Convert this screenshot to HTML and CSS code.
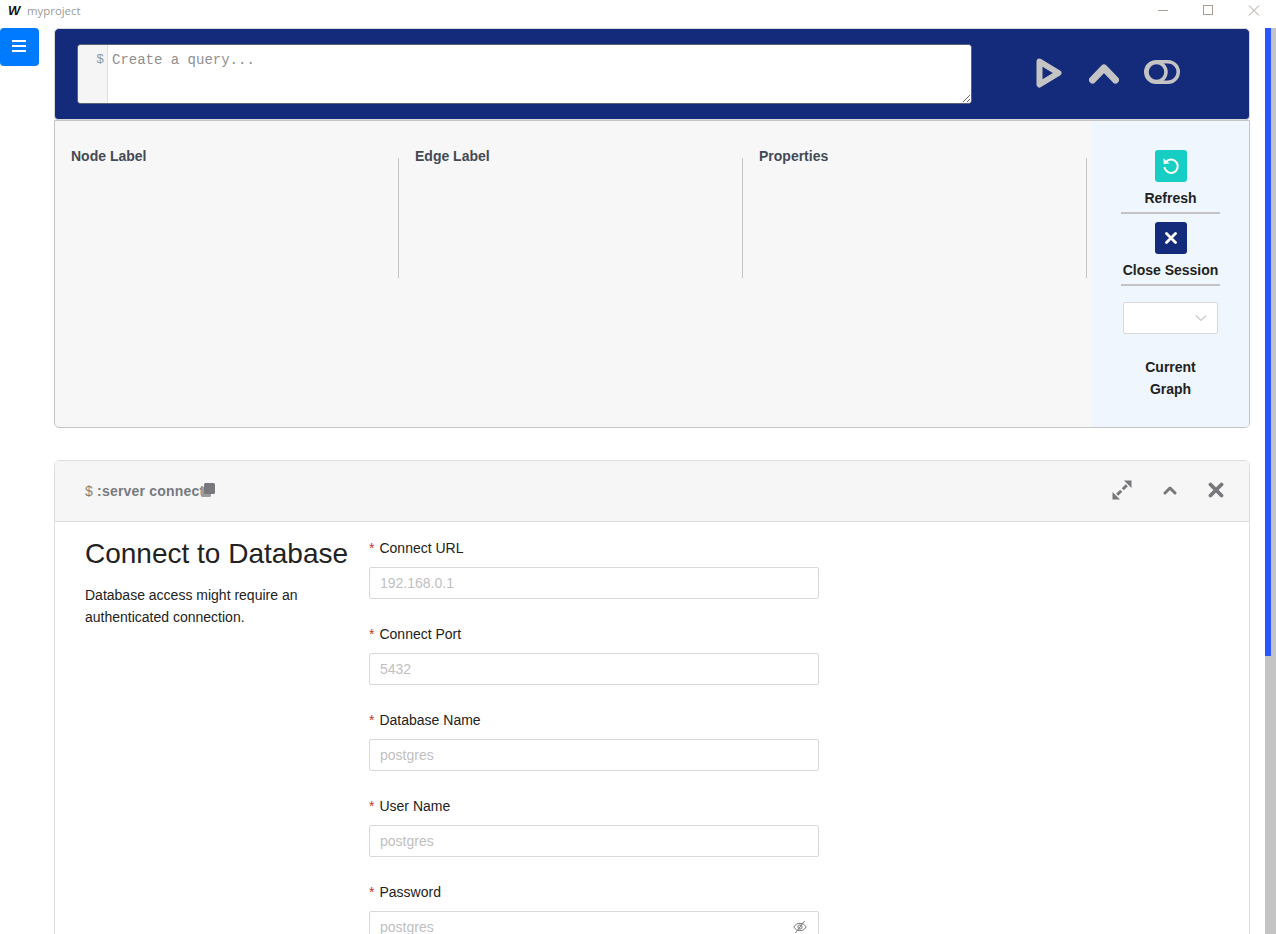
FILE: index.html
```html
<!DOCTYPE html>
<html lang="en">
<head>
<meta charset="utf-8">
<title>myproject</title>
<link rel="stylesheet" href="styles.css">
</head>
<body>
<header class="titlebar">
  <span class="app-logo">W</span>
  <span class="app-name">myproject</span>
  <div class="win-controls">
    <svg class="win-icon" width="12" height="12" viewBox="0 0 12 12"><path d="M2 5.500h10"/></svg>
    <svg class="win-icon" width="12" height="12" viewBox="0 0 12 12"><rect x="1.500" y="0.500" width="9" height="9"/></svg>
    <svg class="win-icon" width="12" height="12" viewBox="0 0 12 12"><path d="M1 0.500l10 10M11 0.500l-10 10"/></svg>
  </div>
</header>
<div class="app">
  <aside class="sidebar">
    <button class="menu-btn" type="button" aria-label="menu">
      <svg width="14" height="12" viewBox="0 0 14 12"><path d="M0 0h14v2H0zM0 5h14v2H0zM0 10h14v2H0z" fill="#fff"/></svg>
    </button>
  </aside>
  <main class="main">
    <section class="query-panel">
      <div class="editor">
        <div class="gutter">$</div>
        <textarea class="query-input" placeholder="Create a query..."></textarea>
      </div>
      <div class="query-actions">
        <svg class="act-play" width="26" height="30" viewBox="0 0 26 30"><path d="M3.500 3.500 L22.500 15 L3.500 26.500 Z" fill="none" stroke="#c4c4c4" stroke-width="6" stroke-linejoin="round"/></svg>
        <svg class="act-chevron" width="30" height="20" viewBox="0 0 30 20"><path d="M3.500 16 L15 4 L26.500 16" fill="none" stroke="#c4c4c4" stroke-width="7" stroke-linecap="round" stroke-linejoin="round"/></svg>
        <svg class="act-toggle" width="36" height="24" viewBox="0 0 36 24"><rect x="1.750" y="1.750" width="32.500" height="20.500" rx="10.250" fill="none" stroke="#c4c4c4" stroke-width="3.500"/><circle cx="12.500" cy="12" r="9.500" fill="none" stroke="#c4c4c4" stroke-width="3.500"/></svg>
      </div>
    </section>
    <section class="meta-panel">
      <div class="meta-col"><h3 class="meta-title">Node Label</h3></div>
      <div class="meta-col"><h3 class="meta-title">Edge Label</h3></div>
      <div class="meta-col"><h3 class="meta-title">Properties</h3></div>
      <div class="meta-side">
        <button class="square-btn teal" type="button" aria-label="Refresh">
          <svg width="18" height="18" viewBox="0 0 18 18"><path d="M4 4.800A6.700 6.700 0 1 1 2.400 10" fill="none" stroke="#fff" stroke-width="2"/><path d="M1.300 1.200l.5 5.800 5.800-.5z" fill="#fff"/></svg>
        </button>
        <div class="side-label">Refresh</div>
        <div class="side-rule"></div>
        <button class="square-btn navy" type="button" aria-label="Close Session">
          <svg width="12" height="12" viewBox="0 0 12 12"><path d="M1.500 1.500l9 9M10.500 1.500l-9 9" stroke="#fff" stroke-width="2.800" stroke-linecap="round"/></svg>
        </button>
        <div class="side-label">Close Session</div>
        <div class="side-rule"></div>
        <div class="graph-select">
          <svg width="12" height="8" viewBox="0 0 12 8"><path d="M1 1.500l5 5 5-5" fill="none" stroke="#c8c8c8" stroke-width="1.100"/></svg>
        </div>
        <div class="side-label current">Current<br>Graph</div>
      </div>
    </section>
    <section class="card">
      <div class="card-head">
        <div class="card-cmd"><span class="dollar">$</span> :server connect<svg class="copy-icon" width="14" height="14" viewBox="0 0 14 14"><rect x="0" y="4" width="10" height="10" rx="1.500" fill="#9a9a9f"/><rect x="3" y="0" width="11" height="11" rx="1.500" fill="#77777c"/></svg></div>
        <div class="card-tools">
          <svg width="20" height="20" viewBox="0 0 20 20"><path d="M10.800 9.200l4-4M9.200 10.800l-4 4" stroke="#77777c" stroke-width="3"/><path d="M12 .5h7.500V8zM8 19.500H.5V12z" fill="#77777c"/></svg>
          <svg width="14" height="10" viewBox="0 0 14 10"><path d="M2 8L7 3l5 5" fill="none" stroke="#77777c" stroke-width="3" stroke-linecap="round" stroke-linejoin="round"/></svg>
          <svg width="16" height="16" viewBox="0 0 16 16"><path d="M2.500 2.500l11 11M13.500 2.500l-11 11" stroke="#77777c" stroke-width="3.800" stroke-linecap="round"/></svg>
        </div>
      </div>
      <div class="card-body">
        <div class="intro">
          <h1 class="intro-title">Connect to Database</h1>
          <p class="intro-text">Database access might require an authenticated connection.</p>
        </div>
        <form class="conn-form">
          <div class="field"><label class="field-label"><span class="req">*</span>Connect URL</label><input class="field-input" placeholder="192.168.0.1"></div>
          <div class="field"><label class="field-label"><span class="req">*</span>Connect Port</label><input class="field-input" placeholder="5432"></div>
          <div class="field"><label class="field-label"><span class="req">*</span>Database Name</label><input class="field-input" placeholder="postgres"></div>
          <div class="field"><label class="field-label"><span class="req">*</span>User Name</label><input class="field-input" placeholder="postgres"></div>
          <div class="field"><label class="field-label"><span class="req">*</span>Password</label>
            <div class="pw-wrap"><input class="field-input" placeholder="postgres">
              <svg class="eye" width="14" height="14" viewBox="0 0 14 14"><path d="M.8 7C2.500 4.500 4.500 3.300 7 3.300S11.500 4.500 13.200 7C11.500 9.500 9.500 10.700 7 10.700S2.500 9.500 .8 7z" fill="none" stroke="#777" stroke-width="1"/><circle cx="7" cy="7" r="2.100" fill="none" stroke="#777" stroke-width="1"/><path d="M2.500 13L11.500 1" stroke="#777" stroke-width="1"/></svg>
            </div>
          </div>
        </form>
      </div>
    </section>
  </main>
  <div class="scrollbar"><div class="scroll-thumb"></div></div>
</div>
</body>
</html>
```

FILE: styles.css
```css
* { box-sizing: border-box; }
html, body { margin: 0; height: 934px; overflow: hidden; background: #fff; }
body { font-family: "Liberation Sans", Arial, sans-serif; font-size: 14px; color: #222; }

.titlebar { height: 28px; display: flex; align-items: flex-start; padding: 4px 0 0 8px; }
.app-logo { width: 11px; height: 13px; font: italic bold 13px/13px "Liberation Sans", sans-serif; color: #111; text-align: center; letter-spacing: -1px; }
.app-name { margin-left: 8px; font: 11.4px/14px "Open Sans", sans-serif; color: #9a9a9a; }
.win-controls { margin-left: auto; display: flex; gap: 34px; padding: 1px 16px 0 0; }
.win-icon { fill: none; stroke: #a89f94; stroke-width: 1; }

.app { display: flex; height: 906px; overflow: hidden; }
.sidebar { width: 54px; flex: none; }
.menu-btn { width: 39px; height: 38px; padding: 0 1px 2px 0; border: 0; border-radius: 4px; background: #007bff; display: flex; align-items: center; justify-content: center; }
.main { width: 1196px; flex: none; }

.query-panel { height: 92px; background: #142a7a; border: 1px solid #d8d8d8; border-radius: 5px 5px 4px 4px; display: flex; padding: 15px 0 0 22px; }
.editor { width: 895px; height: 60px; display: flex; border: 1px solid #5a6275; border-radius: 4px; background: #fff; overflow: hidden; flex: none; }
.gutter { width: 30px; flex: none; background: #f5f5f5; border-right: 1px solid #ddd; font: 13px/20px "Liberation Mono", monospace; color: #8a9aa0; text-align: right; padding: 5px 3px 0 0; }
.query-input { flex: 1; border: 0; outline: 0; margin: 0; padding: 5px 4px; font: 14px/20px "Liberation Mono", monospace; resize: vertical; color: #333; }
.query-input::placeholder { color: #8f8f8f; opacity: 1; }
.query-actions { display: flex; align-items: center; gap: 26px; margin-left: 64px; height: 59px; }
.act-play { margin-top: -1px; }
.act-chevron { margin: 1px -1px 0 1px; }
.act-toggle { margin-top: -3px; }

.meta-panel { height: 308px; border: 1px solid #c4c4c4; border-radius: 0 0 5px 5px; background: #f7f7f7; display: grid; grid-template-columns: 344px 344px 344px 157px; overflow: hidden; }
.meta-col { height: 120px; margin-top: 37px; border-right: 1px solid #c4c4c4; padding-left: 16px; }
.meta-title { margin: -12px 0 0; font-size: 14px; line-height: 20px; font-weight: bold; color: #444a55; }
.meta-side { grid-column: 4; margin-left: 5px; width: 157px; background: #eff6fd; display: flex; flex-direction: column; align-items: center; padding-top: 29px; }
.square-btn { width: 32px; height: 32px; padding: 0; border: 0; border-radius: 3px; display: flex; align-items: center; justify-content: center; flex: none; }
.teal { background: #17cec5; }
.navy { background: #142a7a; }
.side-label { margin-top: 5px; font-size: 14px; line-height: 22px; font-weight: bold; color: #222; text-align: center; white-space: nowrap; }
.side-rule { width: 99px; height: 2px; background: #c4c4c4; margin: 3px 0 8px; flex: none; }
.graph-select { width: 95px; height: 32px; margin-top: 8px; background: #fff; border: 1px solid #d9d9d9; border-radius: 2px; display: flex; align-items: center; justify-content: flex-end; padding-right: 10px; flex: none; }
.side-label.current { margin-top: 22px; }

.card { margin-top: 32px; height: 520px; border: 1px solid #ddd; border-radius: 5px 5px 0 0; background: #fff; }
.card-head { height: 61px; background: #f6f6f6; border-bottom: 1px solid #ddd; display: flex; align-items: center; justify-content: space-between; padding: 0 25px 0 30px; }
.card-cmd { display: flex; align-items: center; font-size: 14px; font-weight: bold; color: #777a80; white-space: pre; letter-spacing: .2px; }
.dollar { font-weight: normal; color: #8a8070; }
.copy-icon { margin: -2px 0 0 -3px; }
.card-tools { display: flex; align-items: center; gap: 31px; padding-bottom: 2px; }
.card-body { display: flex; padding: 15px 0 0 30px; }
.intro { width: 284px; flex: none; }
.intro-title { margin: 0; font-size: 28px; line-height: 34px; font-weight: normal; color: #222; }
.intro-text { margin: 13px 0 0; width: 225px; font-size: 14px; line-height: 22px; color: #222; }
.conn-form { width: 450px; }
.field { margin-bottom: 24px; }
.field-label { display: block; height: 22px; margin-bottom: 8px; font-size: 14px; line-height: 22px; color: #222; }
.req { color: #c0391e; margin-right: 5px; }
.field-input { display: block; width: 100%; height: 32px; padding: 0 10px; border: 1px solid #d9d9d9; border-radius: 2px; font: 14px "Liberation Sans", Arial, sans-serif; outline: 0; background: #fff; }
.field-input::placeholder { color: #bfbfbf; opacity: 1; }
.pw-wrap { position: relative; }
.eye { position: absolute; right: 12px; top: 9px; }

.scrollbar { width: 11px; flex: none; margin-left: 15px; background: #c4c4c4; height: 906px; }
.scroll-thumb { width: 6px; height: 628px; background: #2a56ff; }
```
